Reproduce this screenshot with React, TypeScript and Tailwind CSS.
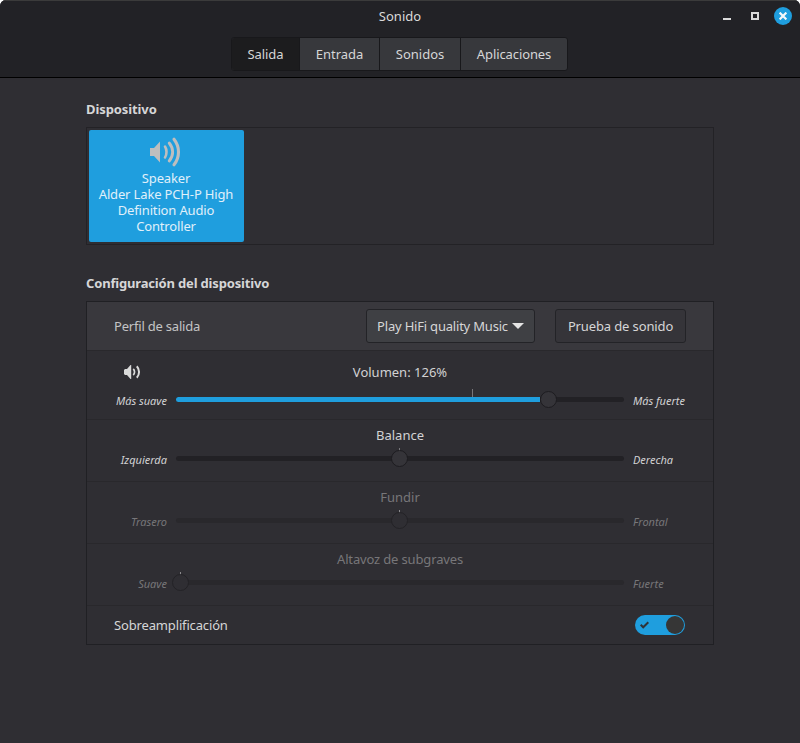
import React, { useState } from 'react';

const TABS = [
  { label: 'Salida', width: 'w-[68px]', spacing: 'tracking-[-0.05px]' },
  { label: 'Entrada', width: 'w-[80px]', spacing: 'tracking-[0px]' },
  { label: 'Sonidos', width: 'w-[81px]', spacing: 'tracking-[0px]' },
  { label: 'Aplicaciones', width: 'w-[106px]', spacing: 'tracking-[-0.1px]' },
];

const TitleBar: React.FC = () => (
  <div className="h-[31px] flex items-center">
    <div className="w-[120px]" />
    <div className="flex-1 pb-0.5 text-center text-[#dadada]">Sonido</div>
    <div className="w-[120px] pr-2 pb-px flex items-center justify-end">
      <button className="w-2 h-2 mr-5 flex items-end" title="Minimizar">
        <span className="w-2 h-0.5 bg-[#dadada]" />
      </button>
      <button className="w-2 h-2 mr-[15px] border-2 border-[#dadada]" title="Maximizar" />
      <button className="w-[18px] h-[18px] rounded-full bg-[#1f9ede] flex items-center justify-center" title="Cerrar">
        <svg width="8" height="8" viewBox="0 0 8 8" stroke="#f4f8fa" strokeWidth="2.200">
          <path d="M.6 .6l6.800 6.800M7.400 .6L.6 7.400" />
        </svg>
      </button>
    </div>
  </div>
);

const SpeakerIcon: React.FC = () => (
  <svg width="32" height="32" viewBox="0 0 32 32" fill="none" stroke="#bebebe" strokeLinecap="round">
    <path d="M0 12h4l6-6.500v21L4 20H0z" fill="#bebebe" stroke="none" />
    <path d="M15 10.500c2 3 2 8 0 11" strokeWidth="2.600" />
    <path d="M19.200 7c4.600 5.500 4.600 12.500 0 18" strokeWidth="2.900" />
    <path d="M24 3.200c6 7.600 6 18 0 25.600" strokeWidth="3.100" />
  </svg>
);

const VolumeIcon: React.FC = () => (
  <svg width="17" height="14" viewBox="0 0 17 14" fill="none" stroke="#dadada">
    <path d="M0 5l1-1h2L6.500 0H7.200v14H6.500L3 10H1L0 9z" fill="#dadada" stroke="none" />
    <path d="M9.200 4c1.800 1.500 1.800 4.500 0 6" strokeWidth="1.700" />
    <path d="M12.800 1.300c3 3.200 3 8.200 0 11.400" strokeWidth="2" />
  </svg>
);

interface SliderProps {
  title: string;
  low: string;
  high: string;
  value: number;
  mark: number;
  volume?: boolean;
  disabled?: boolean;
  titleSpacing?: string;
}

const SliderRow: React.FC<SliderProps> = ({ title, low, high, value, mark, volume, disabled, titleSpacing = '' }) => (
  <div
    className={`${volume ? 'h-[69px] pt-[11px]' : 'h-[62px] pt-[5px]'} ${disabled ? 'text-[#777679]' : 'text-[#d2d2d3]'} border-b border-[#29282c]`}
  >
    <div className="h-5 flex items-center">
      <div className="w-[89px] pl-[37px]">{volume && <VolumeIcon />}</div>
      <div className={`w-[448px] text-center leading-5 ${titleSpacing}`}>{title}</div>
    </div>
    <div className={`${volume ? 'mt-[9px]' : 'mt-[5px]'} h-[17px] flex items-center text-[11px] italic`}>
      <div className="w-20 mr-[9px] pt-[3px] text-right whitespace-nowrap">{low}</div>
      <div className={`relative w-[448px] h-[5px] rounded-full ${disabled ? 'bg-[#29282c]' : 'bg-[#222125]'}`}>
        <div
          className={`absolute w-px -top-2 h-2 ${disabled ? 'bg-[#8b8a8d]' : 'bg-[#77767a]'}`}
          style={{ left: mark }}
        />
        {volume && <div className="h-full rounded-l-full bg-[#1f9ede]" style={{ width: value - 8 }} />}
        <div
          className={`absolute -top-1.5 w-[17px] h-[17px] rounded-full border ${disabled ? 'bg-[#2f2e33] border-[#232226]' : 'bg-[#353439] border-[#1d1c20]'}`}
          style={{ left: value - 8 }}
        />
      </div>
      <div className="ml-[9px] pt-[3px] whitespace-nowrap">{high}</div>
    </div>
  </div>
);

const App: React.FC = () => {
  const [tab, setTab] = useState('Salida');

  return (
    <div className="w-[800px] h-[743px] bg-white">
      <div className="h-full rounded-t-[6px] overflow-hidden bg-[#2f2e33] text-[#d6d6d7] text-[13px] leading-4 font-['Noto_Sans',sans-serif]">
        <header className="h-[78px] bg-[#222226] border-t border-t-[#3b3b3b] border-b border-b-black">
          <TitleBar />
          <nav className="w-[337px] h-[34px] mt-[5px] ml-[231px] flex rounded-[3px] border border-[#18181b] overflow-hidden bg-[#37383c]">
            {TABS.map((t, i) => (
              <button
                key={t.label}
                onClick={() => setTab(t.label)}
                className={`${t.width} ${t.spacing} shrink-0 ${i < 3 ? 'border-r border-[#18181b]' : ''} ${tab === t.label ? 'bg-[#1c1c1e]' : ''}`}
              >
                {t.label}
              </button>
            ))}
          </nav>
        </header>

        <main className="w-[628px] ml-[86px] pt-[23px]">
          <h2 className="h-4 font-bold tracking-[-0.1px]">Dispositivo</h2>
          <div className="mt-[10px] h-[118px] p-0.5 border border-[#232226]">
            <div className="w-[155px] h-[112px] pt-[6px] pr-px rounded-[2px] bg-[#1f9ede] text-[#e0f0fa] flex flex-col items-center">
              <SpeakerIcon />
              <p className="w-[140px] mt-[2px] text-center tracking-[-0.15px]">
                Speaker
                <br />
                Alder Lake PCH-P High Definition Audio Controller
              </p>
            </div>
          </div>

          <h2 className="mt-[30px] h-4 font-bold tracking-[-0.17px]">Configuración del dispositivo</h2>
          <section className="mt-[10px] border border-[#202024]">
            <div className="h-[49px] pl-[27px] pr-[27px] flex items-center bg-[#39383d] border-b border-[#29282c]">
              <div className="flex-1 text-[#c4c4c5] tracking-[-0.2px]">Perfil de salida</div>
              <button className="w-[169px] h-[34px] mr-5 flex items-center justify-center gap-1 rounded-[3px] border border-[#232327] bg-[#3f4044] whitespace-nowrap tracking-[-0.2px]">
                Play HiFi quality Music
                <svg width="12" height="6" viewBox="0 0 12 6" fill="#e4e4e4">
                  <path d="M0 0h12L6 6z" />
                </svg>
              </button>
              <button className="w-[131px] h-[34px] rounded-[3px] border border-[#232327] bg-[#353439] whitespace-nowrap tracking-[-0.13px]">
                Prueba de sonido
              </button>
            </div>
            <SliderRow volume title="Volumen: 126%" low="Más suave" high="Más fuerte" value={372} mark={296} />
            <SliderRow title="Balance" low="Izquierda" high="Derecha" value={223} mark={223} />
            <SliderRow disabled title="Fundir" low="Trasero" high="Frontal" value={223} mark={223} />
            <SliderRow disabled title="Altavoz de subgraves" low="Suave" high="Fuerte" value={4} mark={4} titleSpacing="tracking-[-0.15px]" />
            <div className="h-[38px] pl-[27px] pr-7 flex items-center justify-between">
              <div className="tracking-[-0.15px]">Sobreamplificación</div>
              <button className="w-[50px] h-5 pl-[5px] pr-px flex items-center justify-between rounded-full bg-[#1f9ede]" role="switch" aria-checked="true">
                <svg width="9" height="8" viewBox="0 0 9 8" fill="none" stroke="#2f3338" strokeWidth="2">
                  <path d="M.7 3.800l2.500 2.500L8.300 1.200" />
                </svg>
                <span className="w-[18px] h-[18px] rounded-full bg-[#363636]" />
              </button>
            </div>
          </section>
        </main>
      </div>
    </div>
  );
};

export default App;
